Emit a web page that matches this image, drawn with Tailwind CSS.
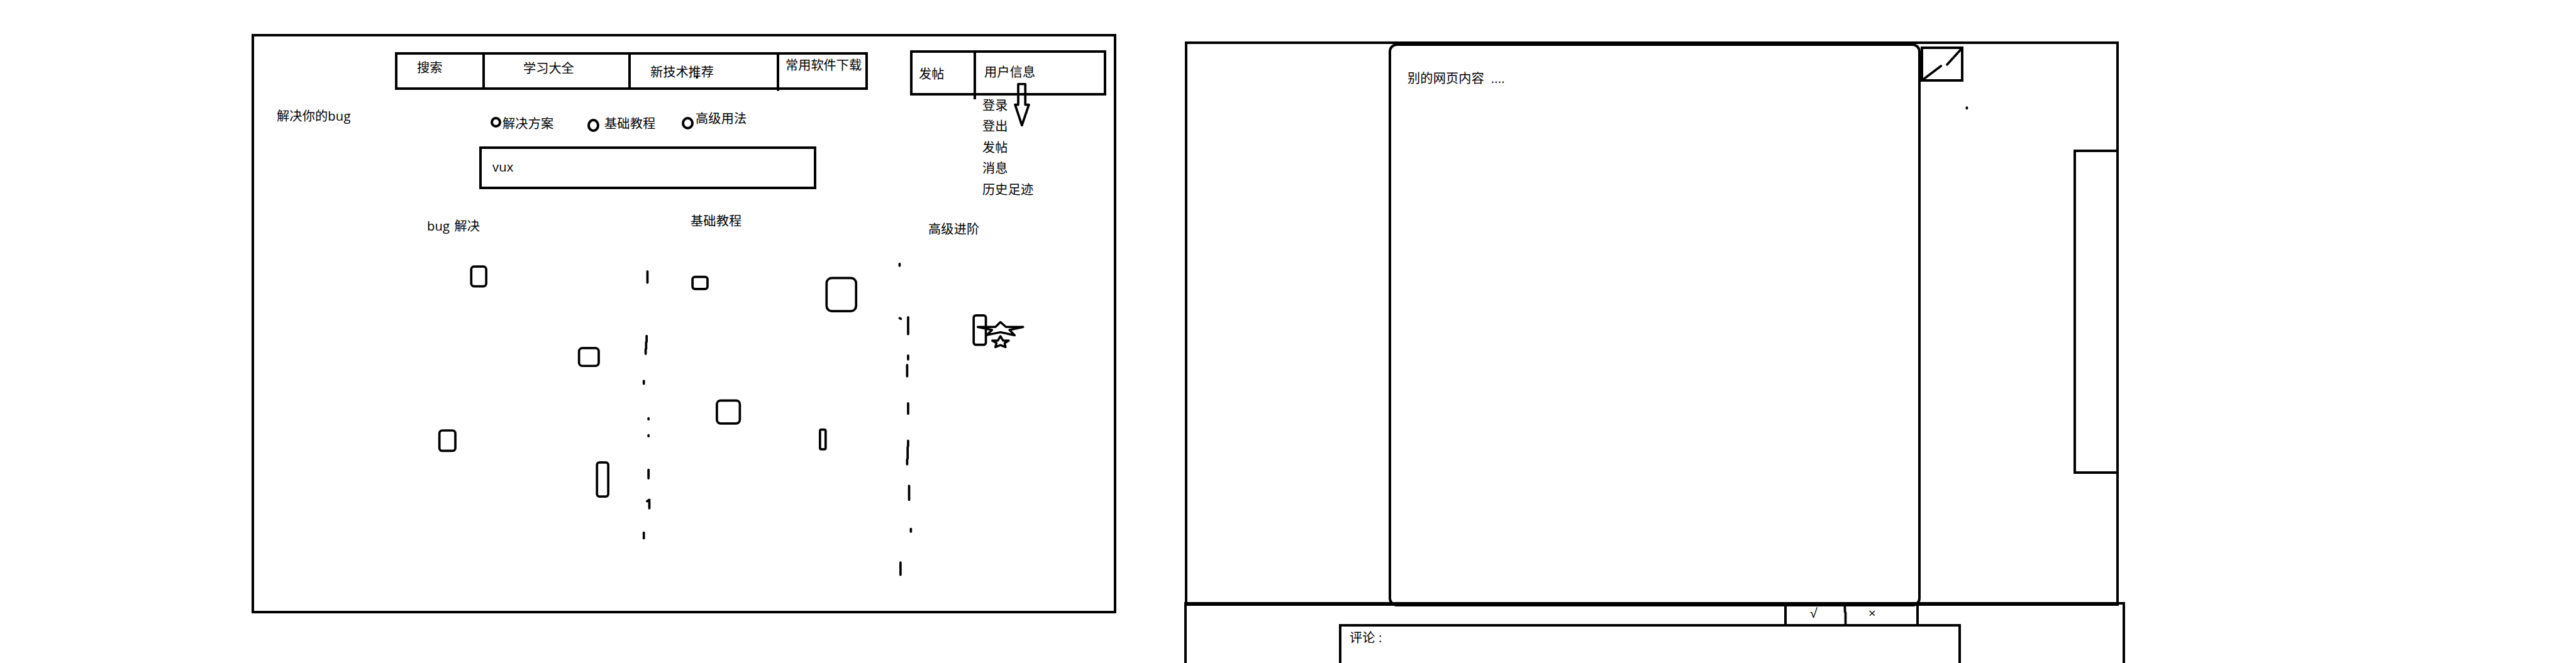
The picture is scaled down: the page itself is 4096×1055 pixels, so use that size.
<!DOCTYPE html>
<html lang="zh-CN">
<head>
<meta charset="utf-8">
<title>Wireframe</title>
<script src="https://cdn.jsdelivr.net/npm/@tailwindcss/browser@4"></script>
</head>
<body class="relative flex h-[1055px] w-[4096px] items-start overflow-hidden bg-white font-['Open_Sans','Noto_Sans_CJK_SC',sans-serif] text-[20.2px] leading-[28px] tracking-[0.15px] whitespace-nowrap text-black">

  <!-- Search page -->
  <section class="mt-[54px] ml-[400px] h-[922px] w-[1375px] shrink-0 border-4 border-black">
    <header class="flex h-[94px] items-start pt-[22px] pl-[224px]">
      <nav class="mt-[3px] flex h-[60px] w-[752px] border-4 border-black tracking-normal">
        <a class="w-[139px] shrink-0 border-r-4 border-black pt-[6px] pl-[31px]">搜索</a>
        <a class="w-[232px] shrink-0 border-r-4 border-black pt-[7px] pl-[61px]">学习大全</a>
        <a class="w-[236px] shrink-0 border-r-4 border-black pt-[13px] pl-[31px]">新技术推荐</a>
        <a class="pt-[2px] pl-[10px]">常用软件下载</a>
      </nav>
      <div class="ml-[67px] flex h-[72px] w-[312px] border-4 border-black">
        <a class="h-[74px] w-[101px] shrink-0 border-r-4 border-black pt-[19px] pl-[10px]">发帖</a>
        <a class="pt-[16px] pl-[13px]">用户信息</a>
      </div>
    </header>

    <div class="flex h-[184px] items-start">
      <h1 class="mt-[18px] ml-[36px] w-[322px] shrink-0">解决你的bug</h1>
      <div class="w-[536px] shrink-0">
        <div class="flex h-[81px] items-start pl-[18px]">
          <span class="mt-[34px] h-[17px] w-[17px] shrink-0 rounded-[50%] border-4 border-black"></span>
          <label class="mt-[30px] ml-[2px] w-[82px] shrink-0">解决方案</label>
          <span class="mt-[37px] ml-[53px] h-[21px] w-[19px] shrink-0 rounded-[50%] border-4 border-black"></span>
          <label class="mt-[30px] ml-[8px] w-[82px] shrink-0">基础教程</label>
          <span class="mt-[34px] ml-[41px] h-[20px] w-[19px] shrink-0 rounded-[50%] border-4 border-black"></span>
          <label class="mt-[22px] ml-[3px] w-[82px] shrink-0">高级用法</label>
        </div>
        <div class="h-[68px] border-4 border-black pt-[14px] pl-[17px]">vux</div>
      </div>
      <ul class="-mt-px ml-[264px] leading-[33.45px]">
        <li>登录</li>
        <li>登出</li>
        <li>发帖</li>
        <li>消息</li>
        <li>历史足迹</li>
      </ul>
    </div>

    <div class="flex items-start pl-[275px]">
      <h2 class="mt-[9px] w-[419px] shrink-0 [word-spacing:2px]">bug 解决</h2>
      <h2 class="mt-px w-[378px] shrink-0">基础教程</h2>
      <h2 class="mt-[14px]">高级进阶</h2>
    </div>
  </section>

  <!-- Content page with comments -->
  <section class="ml-[108px] w-[1496px] shrink-0 pt-[66px]">
    <div class="ml-px flex h-[898px] w-[1485px] items-start border-4 border-black">
      <article class="-mt-px ml-[320px] h-[896px] w-[846px] shrink-0 rounded-[13px] border-4 border-black pt-[37px] pl-[26px] whitespace-pre">别的网页内容  ....</article>
      <div class="mt-[4px] h-[56px] w-[68px] shrink-0 border-4 border-black"></div>
      <div class="mt-[168px] ml-auto h-[516px] w-[68px] shrink-0 border-4 border-r-0 border-black"></div>
    </div>
    <div class="-mt-[6px] h-[97px] w-[1496px] border-4 border-b-0 border-black">
      <div class="ml-[950px] flex h-[31px] w-[214px] items-start border-x-4 border-black">
        <button class="-mt-px w-[87px] pl-[37px] text-left">√</button>
        <button class="-mt-px pl-[43px] text-left">×</button>
      </div>
      <div class="ml-[242px] h-[62px] w-[989px] border-4 border-b-0 border-black pt-[3px] pl-[13px]">评论 :</div>
    </div>
  </section>

  <!-- Freehand marks drawn over both pages -->
  <svg class="absolute inset-0 h-[1055px] w-[4096px]" viewBox="0 0 5496 1416" preserveAspectRatio="none" fill="none" stroke="#000" stroke-width="5" stroke-linecap="round" stroke-linejoin="round">
    <path d="M1487 164v1.500M1660 190v2"/>
    <path d="M2172.400 179.500H2187.500V223.500H2195.200L2180.300 267.500L2165.700 223.500H2172.400Z"/>
    <!-- cards -->
    <rect x="1005.400" y="569.400" width="32" height="42" rx="6"/>
    <rect x="1235.400" y="743.500" width="42" height="38" rx="7"/>
    <rect x="937.500" y="919.400" width="34" height="43.500" rx="6"/>
    <rect x="1273.700" y="987.700" width="24" height="72.700" rx="5"/>
    <rect x="1477.500" y="591.400" width="32" height="25.700" rx="5"/>
    <rect x="1763.500" y="593.700" width="63" height="70.700" rx="11"/>
    <rect x="1529.500" y="855.400" width="49" height="49" rx="8"/>
    <rect x="1749.500" y="917.400" width="12" height="42.200" rx="3"/>
    <rect x="2077.400" y="673.500" width="26" height="63" rx="5"/>
    <!-- first column divider -->
    <path d="M1381.400 579.500V603.500M1379.600 717.500V730L1378.500 731V745L1377.500 746V755.500M1373.600 813.500V819.500M1383.600 893.500V895.500M1383.600 929.500V931.500M1383.600 1003.500V1021.500M1380.700 1070.500L1385.400 1067.500V1085.500M1373.600 1137.500V1149.500"/>
    <!-- second column divider -->
    <path d="M1919.300 563.500V567.500M1919.500 679.500L1922 681M1937.500 677.500V713.500M1937.500 759.500V767.500M1935.400 779.500V803.500M1937.500 861.500V883.500M1937.500 941.500V952L1936.500 956V978L1935.400 982V991.500M1939.600 1037.500V1067.500M1943.400 1129.500V1135.500M1921.300 1201.500V1227.500"/>
    <!-- stars -->
    <path stroke-width="4.600" d="M2086 698.300H2123.800L2134.500 687.800L2146.200 698.300H2183L2153.800 704.600L2164.800 716L2134.500 709.500L2105.500 715.600L2116.600 704.600Z"/>
    <path stroke-width="4.600" d="M2117 727.400H2129L2134.500 718L2140 727.400H2152.200L2143.400 732.900L2145.400 741.300L2134.500 737L2123.500 741.300L2126.200 732.900Z"/>
    <!-- corner fold -->
    <path d="M4104 169L4141.200 141M4154.200 138L4185 104M4196.300 229.500V231.500"/>
    <path d="M3936 1294L3936.300 1306L3937.500 1309V1333"/>
  </svg>
</body>
</html>
